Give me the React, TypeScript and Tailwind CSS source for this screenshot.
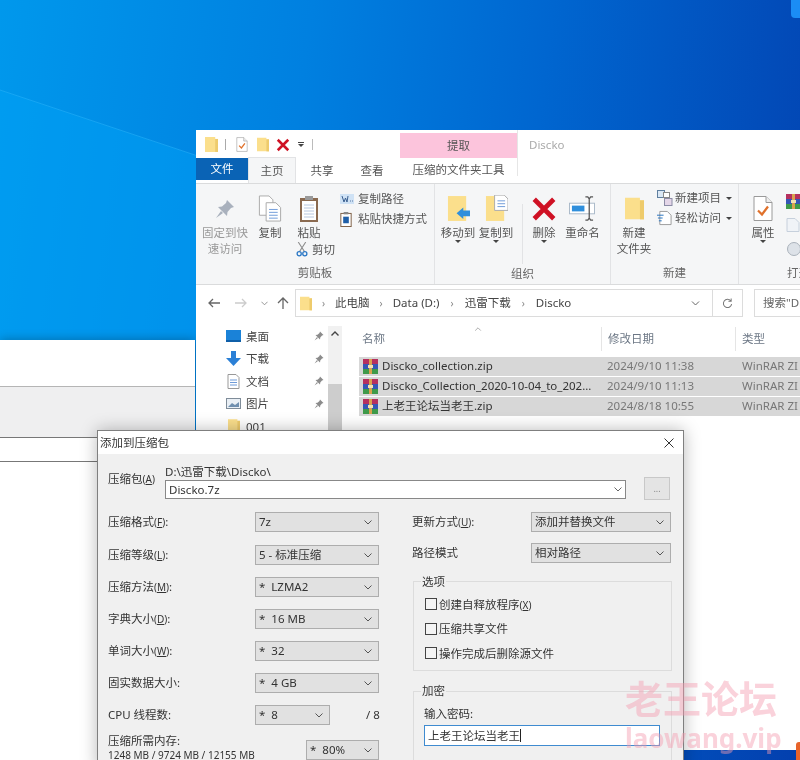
import type { ReactNode } from 'react';

const Folder = ({ className = 'w-[14px] h-[16px]' }: { className?: string }) => (
  <svg viewBox="0 0 14 16" className={className}>
    <path d="M0 0H11V2H14V16H0Z" fill="#fbdf8c" />
    <path d="M11 2H14V16H11Z" fill="#eecb6c" />
  </svg>
);

const RedX = ({ className }: { className: string }) => (
  <svg viewBox="0 0 24 24" className={className}>
    <path d="M3 3L21 21M21 3L3 21" stroke="#cf1124" strokeWidth="4.4" />
  </svg>
);

const DocCheck = ({ className }: { className: string }) => (
  <svg viewBox="0 0 20 26" className={className}>
    <path d="M1 1H13L19 7V25H1Z" fill="#fff" stroke="#9a9a9a" />
    <path d="M13 1V7H19" fill="#eee" stroke="#9a9a9a" />
    <path d="M5 15L9 19L15 11" fill="none" stroke="#e0712b" strokeWidth="2.2" />
  </svg>
);

const Pin = () => (
  <svg viewBox="0 0 20 20" className="w-[20px] h-[20px]">
    <path d="M12 1L19 8L16 9L12.5 13L12 17L3 8L7 7.5L11 4Z" fill="#a9b1bd" />
    <path d="M6 12L1 19L8 14Z" fill="#a9b1bd" />
  </svg>
);

const TinyPin = () => (
  <svg viewBox="0 0 20 20" className="w-[10px] h-[10px]">
    <path d="M12 1L19 8L16 9L12.5 13L12 17L3 8L7 7.5L11 4Z" fill="#8b8b8b" />
    <path d="M6 12L1 19L8 14Z" fill="#8b8b8b" />
  </svg>
);

const CopyIcon = () => (
  <svg viewBox="0 0 24 28" className="w-[24px] h-[27px]">
    <path d="M1 1H11L15 5V21H1Z" fill="#fff" stroke="#aaa" />
    <path d="M8 8H18L23 13V27H8Z" fill="#fff" stroke="#aaa" />
    <path d="M11 15H20M11 18H20M11 21H20M11 24H20" stroke="#6f9bd8" />
  </svg>
);

const PasteIcon = () => (
  <svg viewBox="0 0 20 28" className="w-[20px] h-[28px]">
    <rect x="1" y="3" width="18" height="24" fill="#8a6a50" />
    <rect x="3" y="6" width="14" height="19" fill="#fff" />
    <path d="M5 10H15M5 13H15M5 16H15M5 19H15M5 22H15" stroke="#b8c8e0" />
    <rect x="6" y="1" width="8" height="4" fill="#9a9a9a" />
  </svg>
);

const PathIcon = () => (
  <svg viewBox="0 0 14 10" className="w-[14px] h-[10px]">
    <rect width="14" height="10" fill="#cfe2f5" />
    <path d="M2 2L4 8L5.5 4L7 8L8 2M10 7H10.8M12 7H12.8" stroke="#3a5f90" fill="none" />
  </svg>
);

const ShortcutIcon = () => (
  <svg viewBox="0 0 12 16" className="w-[12px] h-[15px]">
    <rect x="0.5" y="1.5" width="11" height="14" fill="#fff" stroke="#7a5b40" />
    <rect x="3" y="5" width="6" height="7" fill="#1f5fa8" />
    <rect x="3.5" y="0" width="5" height="2.5" fill="#888" />
  </svg>
);

const Scissors = () => (
  <svg viewBox="0 0 12 16" className="w-[12px] h-[15px] shrink-0">
    <path d="M2 0L8.5 10M10 0L3.5 10" stroke="#8d8d8d" strokeWidth="1.1" />
    <circle cx="3" cy="12.5" r="2.2" fill="none" stroke="#2b78c5" strokeWidth="1.4" />
    <circle cx="9" cy="12.5" r="2.2" fill="none" stroke="#2b78c5" strokeWidth="1.4" />
  </svg>
);

const MoveIcon = ({ arrow }: { arrow: boolean }) => (
  <svg viewBox="0 0 24 28" className="w-[23px] h-[27px]">
    <path d="M1 1H20V27H1Z" fill="#fbdf8c" />
    {arrow ? (
      <path d="M10 19L17 13V16H24V22H17V25Z" fill="#2f8fdc" />
    ) : (
      <g>
        <path d="M10 0H20L24 4V16H10Z" fill="#fff" stroke="#aaa" />
        <path d="M13 6H21M13 9H21M13 12H21" stroke="#6f9bd8" />
      </g>
    )}
  </svg>
);

const RenameIcon = () => (
  <svg viewBox="0 0 28 26" className="w-[27px] h-[25px]">
    <rect x="0.5" y="7.5" width="26" height="11" fill="#fff" stroke="#a9b9c9" />
    <rect x="3" y="10" width="13" height="6" fill="#2f8fdc" />
    <path d="M17 1H19.5L21 3L22.5 1H25M21 3V23M17 25H19.5L21 23L22.5 25H25" fill="none" stroke="#555" strokeWidth="1.3" />
  </svg>
);

const NewItemIcon = () => (
  <svg viewBox="0 0 16 16" className="w-[16px] h-[16px]">
    <rect x="0.5" y="0.5" width="7" height="7" fill="#dbe8f5" stroke="#5f7f9f" />
    <rect x="6.5" y="2.5" width="6" height="5" fill="#fff" stroke="#888" />
    <rect x="7.5" y="8.5" width="7.5" height="7" fill="#e4d6e8" stroke="#8c8ca6" />
  </svg>
);

const EasyIcon = () => (
  <svg viewBox="0 0 16 16" className="w-[15px] h-[16px]">
    <path d="M3 1H11L15 5V15H3Z" fill="#fff" stroke="#999" />
    <path d="M0 5H7M1 8H6M2 11H5" stroke="#1f6fbf" />
  </svg>
);

const RarIcon = ({ className = 'w-[15px] h-[15px]' }: { className?: string }) => (
  <svg viewBox="0 0 15 15" className={className}>
    <rect y="0" width="15" height="5" fill="#b5305f" />
    <rect y="5" width="15" height="5" fill="#3557b5" />
    <rect y="10" width="15" height="5" fill="#3f9a4a" />
    <rect x="6" width="3" height="15" fill="#d9a24f" />
    <rect x="5" y="6" width="5" height="3" fill="#f2e2b2" />
  </svg>
);

const Caret = () => (
  <svg viewBox="0 0 6 3" className="w-[6px] h-[3px]">
    <path d="M0 0H6L3 3Z" fill="#444" />
  </svg>
);

const Chevron = ({ className = 'w-[8px] h-[5px]', color = '#666' }: { className?: string; color?: string }) => (
  <svg viewBox="0 0 8 5" className={className}>
    <path d="M0.5 0.5L4 4L7.5 0.5" fill="none" stroke={color} />
  </svg>
);

const BigButton = ({ icon, w, lines, caret, muted }: { icon: ReactNode; w: string; lines: string[]; caret?: boolean; muted?: boolean }) => (
  <div className={`flex flex-col items-center shrink-0 ${w}`}>
    <div className="h-[33px] flex items-center justify-center">{icon}</div>
    {lines.map((l) => (
      <span key={l} className={`h-[16px] leading-[16px] whitespace-nowrap ${muted ? 'text-[#999]' : 'text-[#555]'}`}>
        {l}
      </span>
    ))}
    {caret && (
      <span className="mt-[-1px]">
        <Caret />
      </span>
    )}
  </div>
);

const SmallRow = ({ icon, label, caret }: { icon: ReactNode; label: string; caret?: boolean }) => (
  <div className="flex items-center h-[20px]">
    <span className="w-[18px] flex items-center justify-start">{icon}</span>
    <span className="text-[#555] whitespace-nowrap">{label}</span>
    {caret && (
      <span className="ml-[5px] flex">
        <Caret />
      </span>
    )}
  </div>
);

const RibbonGroup = ({ w, label, children }: { w: string; label: string; children: ReactNode }) => (
  <div className={`flex flex-col shrink-0 border-r border-[#e2e3e5] ${w}`}>
    <div className="flex flex-1 pt-[8px]">{children}</div>
    <div className="h-[21px] leading-[20px] text-center text-[#666]">{label}</div>
  </div>
);

const Ribbon = () => (
  <div className="flex h-[102px] bg-[#f5f6f7] border-y border-[#dadbdc] text-[11.5px]">
    <RibbonGroup w="w-[239px]" label="剪贴板">
      <div className="flex pl-[4px]">
        <BigButton w="w-[50px]" icon={<Pin />} lines={['固定到快', '速访问']} muted />
        <BigButton w="w-[40px]" icon={<CopyIcon />} lines={['复制']} />
        <div className="w-[38px] shrink-0">
          <BigButton w="w-[38px]" icon={<PasteIcon />} lines={['粘贴']} />
          <div className="flex items-center gap-[4px] w-max pl-[6px]">
            <Scissors />
            <span className="text-[#555] whitespace-nowrap">剪切</span>
          </div>
        </div>
        <div className="flex flex-col ml-[12px] -mt-[3px]">
          <SmallRow icon={<PathIcon />} label="复制路径" />
          <SmallRow icon={<ShortcutIcon />} label="粘贴快捷方式" />
        </div>
      </div>
    </RibbonGroup>
    <RibbonGroup w="w-[176px]" label="组织">
      <div className="flex pl-[4px]">
        <BigButton w="w-[38px]" icon={<MoveIcon arrow />} lines={['移动到']} caret />
        <BigButton w="w-[38px]" icon={<MoveIcon arrow={false} />} lines={['复制到']} caret />
        <div className="w-px h-[60px] ml-[7px] mr-[3px] mt-[12px] bg-[#e2e3e5]" />
        <BigButton w="w-[36px]" icon={<RedX className="w-[26px] h-[26px]" />} lines={['删除']} caret />
        <BigButton w="w-[41px]" icon={<RenameIcon />} lines={['重命名']} />
      </div>
    </RibbonGroup>
    <RibbonGroup w="w-[128px]" label="新建">
      <BigButton w="w-[46px]" icon={<Folder className="w-[19px] h-[25px]" />} lines={['新建', '文件夹']} />
      <div className="flex flex-col -mt-[4px]">
        <SmallRow icon={<NewItemIcon />} label="新建项目" caret />
        <SmallRow icon={<EasyIcon />} label="轻松访问" caret />
      </div>
    </RibbonGroup>
    <div className="flex flex-col flex-1">
      <div className="flex flex-1 pt-[8px] pl-[4px]">
        <BigButton w="w-[40px]" icon={<DocCheck className="w-[20px] h-[27px]" />} lines={['属性']} caret />
        <div className="flex flex-col gap-[9px] ml-[3px] pt-[2px]">
          <RarIcon />
          <svg viewBox="0 0 14 14" className="w-[14px] h-[14px]">
            <path d="M1 0.5H9L13 4.5V13.5H1Z" fill="#f0f3f7" stroke="#c6d0dc" />
          </svg>
          <svg viewBox="0 0 15 15" className="w-[15px] h-[15px]">
            <circle cx="8" cy="8" r="6.5" fill="#dde2e8" stroke="#aab2bb" />
          </svg>
        </div>
      </div>
      <div className="h-[21px] leading-[20px] pl-[48px] text-[#666] whitespace-nowrap">打开</div>
    </div>
  </div>
);

const Crumb = ({ className }: { className: string }) => (
  <span className={`text-[#888] text-[10px] ${className}`}>›</span>
);

const AddressBar = () => (
  <div className="flex items-center h-[36px] text-[11.5px] shrink-0">
    <div className="flex items-center w-[99px] shrink-0 pl-[12px]">
      <svg viewBox="0 0 12 10" className="w-[12px] h-[10px]">
        <path d="M5 1L1 5L5 9M1 5H12" fill="none" stroke="#666" strokeWidth="1.3" />
      </svg>
      <svg viewBox="0 0 12 10" className="w-[12px] h-[10px] ml-[15px]">
        <path d="M7 1L11 5L7 9M11 5H0" fill="none" stroke="#ccc" strokeWidth="1.3" />
      </svg>
      <span className="ml-[14px] flex">
        <Chevron className="w-[7px] h-[5px]" color="#888" />
      </span>
      <svg viewBox="0 0 12 12" className="w-[12px] h-[12px] ml-[9px]">
        <path d="M1 6L6 1L11 6M6 1V12" fill="none" stroke="#666" strokeWidth="1.3" />
      </svg>
    </div>
    <div className="flex items-center w-[448px] h-[28px] border border-[#dcdcdc] shrink-0">
      <span className="pl-[4px]">
        <Folder className="w-[12px] h-[15px]" />
      </span>
      <div className="flex items-center flex-1 text-[#444]">
        <Crumb className="ml-[10px] mr-[10px]" />
        <span>此电脑</span>
        <Crumb className="mx-[10px]" />
        <span>Data (D:)</span>
        <Crumb className="mx-[11px]" />
        <span>迅雷下载</span>
        <Crumb className="mx-[11px]" />
        <span>Discko</span>
      </div>
      <span className="mr-[12px] flex">
        <Chevron className="w-[9px] h-[5px]" />
      </span>
      <div className="flex items-center justify-center w-[30px] h-full border-l border-[#dcdcdc]">
        <svg viewBox="0 0 12 12" className="w-[11px] h-[11px]">
          <path d="M9.5 3A4.5 4.5 0 1 0 10.5 6.5M10 0.5V3.5H7" fill="none" stroke="#777" strokeWidth="1.1" />
        </svg>
      </div>
    </div>
    <div className="flex items-center h-[28px] flex-1 ml-[11px] pl-[8px] border border-[#dcdcdc] border-r-0 text-[#666] whitespace-nowrap overflow-hidden">
      搜索"Di
    </div>
  </div>
);

const navItems = [
  { label: '桌面', icon: <span className="block w-[15px] h-[12px] bg-[#1a82d8] border-b-2 border-[#0f5fa8]" /> },
  {
    label: '下载',
    icon: (
      <svg viewBox="0 0 15 15" className="w-[15px] h-[15px]">
        <path d="M5 0H10V7H15L7.5 15L0 7H5Z" fill="#2b80d6" />
      </svg>
    ),
  },
  {
    label: '文档',
    icon: (
      <svg viewBox="0 0 13 15" className="w-[13px] h-[15px]">
        <path d="M1 0.5H9L12 3.5V14.5H1Z" fill="#fff" stroke="#999" />
        <path d="M3 6H10M3 8.5H10M3 11H10" stroke="#6f9bd8" />
      </svg>
    ),
  },
  {
    label: '图片',
    icon: (
      <svg viewBox="0 0 15 11" className="w-[15px] h-[11px]">
        <rect x="0.5" y="0.5" width="14" height="10" fill="#e9eff5" stroke="#7f8c99" />
        <path d="M2 9L6 5L9 7L13 4V9Z" fill="#6f8faf" />
      </svg>
    ),
  },
  { label: '001', icon: <Folder className="w-[12px] h-[14px]" /> },
];

const files = [
  { name: 'Discko_collection.zip', date: '2024/9/10 11:38' },
  { name: 'Discko_Collection_2020-10-04_to_202...', date: '2024/9/10 11:13' },
  { name: '上老王论坛当老王.zip', date: '2024/8/18 10:55' },
];

const FilesArea = () => (
  <div className="flex flex-1 text-[11.5px]">
    <div className="w-[132px] shrink-0 pt-[4px] text-[#444]">
      {navItems.map((n) => (
        <div key={n.label} className="flex items-center h-[22.5px] pl-[30px] pr-[4px]">
          <span className="w-[15px] flex justify-center">{n.icon}</span>
          <span className="ml-[5px] flex-1">{n.label}</span>
          {n.label !== '001' && <TinyPin />}
        </div>
      ))}
    </div>
    <div className="w-[14px] shrink-0 mt-[5px] h-[105px] bg-[#f1f1f1] flex flex-col">
      <div className="h-[58px] pt-[5px] flex justify-center">
        <svg viewBox="0 0 8 5" className="w-[8px] h-[5px]">
          <path d="M0.5 4.5L4 1L7.5 4.5" fill="none" stroke="#444" strokeWidth="1.4" />
        </svg>
      </div>
      <div className="flex-1 bg-[#cdcdcd]" />
    </div>
    <div className="flex-1 flex flex-col">
      <div className="relative flex h-[36px] items-center text-[#6c7785] shrink-0">
        <span className="absolute left-[132px] top-[6px]">
          <Chevron className="w-[8px] h-[4px] rotate-180" color="#999" />
        </span>
        <span className="w-[259px] pl-[20px]">名称</span>
        <span className="w-[134px] h-[24px] leading-[24px] pl-[6px] border-l border-[#e5e5e5]">修改日期</span>
        <span className="flex-1 h-[24px] leading-[24px] pl-[6px] border-l border-[#e5e5e5]">类型</span>
      </div>
      <div className="flex flex-col gap-px ml-[17px]">
        {files.map((f) => (
          <div key={f.date} className="flex items-center h-[19px] pb-[1px] bg-[#d7d7d7] whitespace-nowrap">
            <span className="w-[242px] shrink-0 flex items-center pl-[4px] text-[#333]">
              <RarIcon />
              <span className="ml-[4px]">{f.name}</span>
            </span>
            <span className="w-[141px] shrink-0 pl-[6px] text-[#777]">{f.date}</span>
            <span className="text-[#777]">WinRAR ZI</span>
          </div>
        ))}
      </div>
    </div>
  </div>
);

const Explorer = () => (
  <div className="absolute left-[196px] top-[130px] w-[604px] h-[620px] bg-white flex flex-col text-[11.5px]">
    <div className="flex h-[53px] shrink-0">
      <div className="w-[204px] shrink-0 flex flex-col">
        <div className="flex items-center h-[28px] pl-[9px] pt-[1px]">
          <Folder className="w-[13px] h-[15px]" />
          <span className="w-px h-[11px] ml-[7px] bg-[#aaa]" />
          <DocCheck className="w-[12px] h-[15px] ml-[10px]" />
          <Folder className="w-[12px] h-[15px] ml-[9px]" />
          <RedX className="w-[14px] h-[14px] ml-[7px]" />
          <span className="ml-[8px] flex flex-col items-center gap-[1px]">
            <span className="w-[6px] h-px bg-[#444]" />
            <Caret />
          </span>
          <span className="w-px h-[11px] ml-[8px] bg-[#bbb]" />
        </div>
        <div className="flex items-end h-[25px] text-[#555]">
          <span className="flex items-center justify-center w-[52px] h-[22px] self-start bg-[#0a63b5] text-white">文件</span>
          <span className="flex items-center justify-center w-[48px] h-[26px] bg-[#f5f6f7] border-x border-t border-[#e2e3e5] z-10">主页</span>
          <span className="flex items-center justify-center w-[52px] h-[25px]">共享</span>
          <span className="flex items-center justify-center w-[48px] h-[25px]">查看</span>
        </div>
      </div>
      <div className="w-[118px] shrink-0 flex flex-col pt-[3px] border-r border-[#e6e6e6] mb-[7px]">
        <div className="flex items-center justify-center h-[25px] bg-[#fcc4dc] text-[#555]">提取</div>
        <div className="h-[18px] pt-[6px] leading-[12px] text-center text-[#555] whitespace-nowrap">压缩的文件夹工具</div>
      </div>
      <div className="pl-[11px] pt-[6px] text-[#aaa]">Discko</div>
    </div>
    <Ribbon />
    <AddressBar />
    <FilesArea />
  </div>
);

const Select = ({ value, w }: { value: string; w: string }) => (
  <div className={`flex items-center justify-between h-[20px] pl-[3px] pr-[6px] bg-[#e1e1e1] border border-[#adadad] text-[#333] shrink-0 whitespace-pre ${w}`}>
    <span>{value}</span>
    <Chevron className="w-[8px] h-[5px]" color="#555" />
  </div>
);

const leftRows = [
  { label: '压缩等级', key: 'L', value: '5 - 标准压缩' },
  { label: '压缩方法', key: 'M', value: '*  LZMA2' },
  { label: '字典大小', key: 'D', value: '*  16 MB' },
  { label: '单词大小', key: 'W', value: '*  32' },
  { label: '固实数据大小', key: '', value: '*  4 GB' },
];

const Mnemonic = ({ label, k }: { label: string; k: string }) => (
  <span className="whitespace-nowrap">
    {label}
    {k && (
      <span className="text-[10px]">
        (<u>{k}</u>)
      </span>
    )}
    :
  </span>
);

const Dialog = () => (
  <div className="absolute left-[97px] top-[430px] w-[587px] h-[340px] bg-[#f0f0f0] border border-[#7f7f7f] shadow-[0_0_16px_rgba(0,0,0,0.28)] text-[11.5px] text-[#333]">
    <div className="flex items-center justify-between h-[23px] pl-[2px] pr-[9px] bg-white">
      <span>添加到压缩包</span>
      <svg viewBox="0 0 10 10" className="w-[10px] h-[10px]">
        <path d="M0.5 0.5L9.5 9.5M9.5 0.5L0.5 9.5" stroke="#333" />
      </svg>
    </div>
    <div className="px-[10px]">
      <div className="flex mt-[10px]">
        <span className="w-[57px] pt-[6px]">
          压缩包<span className="text-[10px]">(<u>A</u>)</span>
        </span>
        <div className="flex flex-col w-[461px]">
          <span className="h-[16px] leading-[16px]">D:\迅雷下载\Discko\</span>
          <div className="flex items-center justify-between h-[19px] pl-[3px] pr-[3px] bg-white border border-[#888]">
            <span>Discko.7z</span>
            <Chevron className="w-[8px] h-[5px]" color="#666" />
          </div>
        </div>
        <span className="flex items-center justify-center w-[26px] h-[23px] mt-[13px] ml-[18px] bg-[#e4e4e4] border border-[#c8c8c8] text-[#888] text-[9px]">...</span>
      </div>
      <div className="flex mt-[12px]">
        <div className="flex flex-col w-[304px] shrink-0">
          <div className="flex items-center mb-[13px]">
            <span className="w-[147px] shrink-0">
              <Mnemonic label="压缩格式" k="F" />
            </span>
            <Select value="7z" w="w-[124px]" />
          </div>
          <div className="flex flex-col gap-[12px]">
            {leftRows.map((r) => (
              <div key={r.label} className="flex items-center">
                <span className="w-[147px] shrink-0">
                  <Mnemonic label={r.label} k={r.key} />
                </span>
                <Select value={r.value} w="w-[124px]" />
              </div>
            ))}
            <div className="flex items-center">
              <span className="w-[147px] shrink-0">CPU 线程数:</span>
              <Select value="*  8" w="w-[75px]" />
              <span className="ml-[36px]">/ 8</span>
            </div>
          </div>
          <div className="flex items-start mt-[8px]">
            <div className="w-[198px] shrink-0 flex flex-col">
              <span className="h-[16px] leading-[16px]">压缩所需内存:</span>
              <span className="h-[13px] leading-[13px] text-[10px] whitespace-nowrap">1248 MB / 9724 MB / 12155 MB</span>
            </div>
            <span className="mt-[7px]">
              <Select value="*  80%" w="w-[73px]" />
            </span>
          </div>
        </div>
        <div className="flex flex-col flex-1">
          <div className="flex items-center mb-[11px]">
            <span className="w-[119px] shrink-0">
              <Mnemonic label="更新方式" k="U" />
            </span>
            <Select value="添加并替换文件" w="w-[140px]" />
          </div>
          <div className="flex items-center">
            <span className="w-[119px] shrink-0">路径模式</span>
            <Select value="相对路径" w="w-[140px]" />
          </div>
          <div className="relative w-[259px] h-[90px] mt-[18px] ml-[1px] border border-[#dcdcdc] pt-[10px] pl-[11px]">
            <span className="absolute left-[7px] top-[-8px] h-[16px] leading-[16px] px-[1px] bg-[#f0f0f0]">选项</span>
            {['创建自释放程序', '压缩共享文件', '操作完成后删除源文件'].map((t, i) => (
              <div key={t} className="flex items-center h-[24.5px]">
                <span className="w-[12px] h-[12px] bg-[#f4f4f4] border border-[#444]" />
                <span className="ml-[3px] -translate-x-px">
                  {t}
                  {i === 0 && <span className="text-[10px]">(<u>X</u>)</span>}
                </span>
              </div>
            ))}
          </div>
          <div className="relative w-[259px] h-[90px] mt-[20px] ml-[1px] border border-[#dcdcdc] pt-[12px] pl-[10px]">
            <span className="absolute left-[7px] top-[-9px] h-[16px] leading-[16px] px-[1px] bg-[#f0f0f0]">加密</span>
            <div className="h-[21px] leading-[20px]">输入密码:</div>
            <div className="flex items-center w-[236px] h-[21px] pl-[3px] bg-white border border-[#3f8bd0]">
              <span className="whitespace-nowrap">上老王论坛当老王</span>
              <span className="w-px h-[13px] bg-[#222]" />
            </div>
          </div>
        </div>
      </div>
    </div>
  </div>
);

const BackWindow = () => (
  <div className="absolute left-0 top-[340px] bottom-0 w-[195px] flex flex-col bg-white shadow-[0_0_10px_rgba(0,0,0,0.3)]">
    <div className="h-[47px] border-b border-[#b5b5b5]" />
    <div className="h-[51px] bg-[#efeff0] border-b border-[#777]" />
    <div className="h-[24px] border-b border-[#777]" />
    <div className="flex-1" />
  </div>
);

const Wallpaper = () => (
  <svg viewBox="0 0 800 760" className="absolute inset-0 w-[800px] h-[760px]">
    <path d="M0 90L210 160L210 340L0 340Z" fill="#00a2f6" opacity="0.45" />
    <path d="M0 90L210 160" stroke="#2fb6fb" strokeWidth="1" opacity="0.45" />
  </svg>
);

export default function App() {
  return (
    <div className="relative w-[800px] h-[760px] overflow-hidden bg-[linear-gradient(97deg,#0098ec_0%,#0080e0_35%,#0066d0_62%,#033fae_100%)] font-['Noto_Sans','Noto_Sans_CJK_SC',sans-serif] blur-[0.35px]">
      <Wallpaper />
      <span className="absolute right-0 top-0 w-[9px] h-[18px] rounded-bl-[4px] bg-[#1b8df5]" />
      <BackWindow />
      <Explorer />
      <Dialog />
      <span className="absolute right-0 top-[742px] w-[4px] h-[18px] rounded-tl-[3px] bg-[#e8632a]" />
      <div className="absolute left-[625px] top-[672px] flex flex-col text-[#f59bb0]/45 font-bold pointer-events-none">
        <span className="text-[38px] leading-[52px] whitespace-nowrap">老王论坛</span>
        <span className="text-[26px] leading-[28px] whitespace-nowrap">laowang.vip</span>
      </div>
    </div>
  );
}
